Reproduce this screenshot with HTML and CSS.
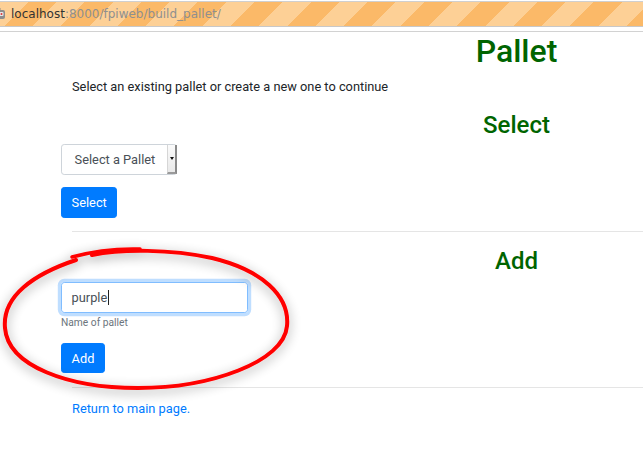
FILE: index.html
```html
<!DOCTYPE html>
<html lang="en">
<head>
<meta charset="utf-8">
<title>Build Pallet</title>
<link rel="stylesheet" href="styles.css">
</head>
<body>
<header class="chrome">
  <div class="urlbar">
    <svg class="bot-icon" width="12" height="12" viewBox="0 0 12 12" aria-hidden="true">
      <rect x="1" y="2" width="10" height="9" rx="2" fill="#8c8c8c"/>
      <rect x="2.5" y="4" width="7" height="4" rx="1" fill="#e8e8e8"/>
      <circle cx="4.5" cy="6" r="1" fill="#d33"/>
      <circle cx="7.5" cy="6" r="1" fill="#d33"/>
      <rect x="5.5" y="0" width="1" height="2" fill="#8c8c8c"/>
    </svg>
    <span class="host">localhost</span><span class="path">:8000/fpiweb/build_pallet/</span>
  </div>
</header>

<main class="page">
  <h1 class="title">Pallet</h1>
  <p class="intro">Select an existing pallet or create a new one to continue</p>

  <h3 class="section-title select-title">Select</h3>
  <form class="pallet-form">
    <div class="fake-select">
      <span class="fake-select-text">Select a Pallet</span>
      <span class="fake-select-btn"><span class="arrow"></span></span>
    </div>
    <button type="button" class="btn">Select</button>
  </form>

  <hr class="divider divider-top">

  <h3 class="section-title add-title">Add</h3>
  <form class="pallet-form">
    <div class="field"><span>purple</span><span class="caret"></span></div>
    <small class="help">Name of pallet</small>
    <button type="button" class="btn btn-add">Add</button>
  </form>

  <hr class="divider divider-bottom">

  <a class="back-link" href="#">Return to main page.</a>
</main>

<svg class="annotation" width="643" height="465" viewBox="0 0 643 465" aria-hidden="true">
  <defs>
    <filter id="shadow" x="-20%" y="-20%" width="140%" height="140%">
      <feGaussianBlur in="SourceAlpha" stdDeviation="6"/>
      <feOffset dx="0" dy="3" result="b"/>
      <feComponentTransfer><feFuncA type="linear" slope="0.4"/></feComponentTransfer>
      <feMerge><feMergeNode/><feMergeNode in="SourceGraphic"/></feMerge>
    </filter>
  </defs>
  <g filter="url(#shadow)" fill="none" stroke="#ff0000" stroke-linecap="round" stroke-linejoin="round">
    <path stroke-width="4" d="M 92 255 C 122 249, 170 249, 212 258 C 262 270, 290 296, 287 326 C 284 362, 210 388, 138 388 C 68 388, 8 366, 5 328 C 2 296, 34 274, 76 260"/>
    <path stroke-width="3.5" d="M 72 257 Q 104 248, 140 249"/>
  </g>
</svg>
</body>
</html>
```

FILE: styles.css
```css
html, body {
  margin: 0;
  padding: 0;
  width: 643px;
  height: 465px;
  overflow: hidden;
  background: #fff;
}

body {
  position: relative;
  font-family: Roboto, "Liberation Sans", sans-serif;
  font-size: 12.8px;
  line-height: 1.5;
  color: #212529;
}

/* ---- browser url bar strip ---- */
.chrome {
  height: 30px;
  border-bottom: 1px solid #d2d2d2;
  background: #fff;
}

.urlbar {
  margin-top: 1px;
  height: 24px;
  border-top: 1px solid #cfcfcf;
  border-bottom: 1px solid #c8c8c8;
  background: repeating-linear-gradient(135deg, #fdd096 0 20px, #fbb968 20px 40px);
  display: flex;
  align-items: center;
  font-family: "DejaVu Sans", sans-serif;
  font-size: 12px;
  white-space: nowrap;
  overflow: hidden;
}

.bot-icon {
  margin-left: -6px;
  margin-right: 5px;
  flex: none;
}

.host {
  color: #333;
}

.path {
  color: #8f8f8f;
}

/* ---- page ---- */
.page {
  margin-left: 72px;
}

.title {
  margin: 0 0 6.4px;
  padding-left: 318px;
  font-size: 32px;
  font-weight: 500;
  line-height: 38.4px;
  color: #006400;
  text-align: center;
}

.intro {
  margin: 0 0 15px;
}

.section-title {
  margin: 0;
  padding-left: 318px;
  font-size: 24px;
  font-weight: 500;
  line-height: 28.8px;
  color: #006400;
  text-align: center;
}

.select-title {
  margin-bottom: 4.6px;
}

.add-title {
  margin-bottom: 6.7px;
}

.pallet-form {
  margin-left: -11px;
  display: flex;
  flex-direction: column;
  align-items: flex-start;
}

.fake-select {
  box-sizing: border-box;
  width: 116px;
  height: 30.4px;
  border: 1px solid #ced4da;
  border-radius: 3.2px;
  background: #fff;
  display: flex;
  align-items: center;
  justify-content: space-between;
  margin-bottom: 12.6px;
  color: #495057;
}

.fake-select-text {
  padding-left: 12.6px;
}

.fake-select-btn {
  box-sizing: border-box;
  width: 10px;
  height: 29px;
  margin-right: -1px;
  border-left: 1px solid #d6d6d6;
  border-right: 2px solid #8a8a8a;
  border-bottom: 2px solid #9a9a9a;
  background: linear-gradient(#fbfbfb, #e9e9e9);
  display: flex;
  align-items: center;
  justify-content: center;
}

.arrow {
  width: 0;
  height: 0;
  border-left: 2.5px solid transparent;
  border-right: 2.5px solid transparent;
  border-top: 3px solid #111;
}

.btn {
  box-sizing: border-box;
  height: 30.4px;
  padding: 4.8px 9.6px;
  font-family: Roboto, "Liberation Sans", sans-serif;
  font-size: 12.8px;
  line-height: 19.2px;
  color: #fff;
  background: #007bff;
  border: 1px solid #007bff;
  border-radius: 3.2px;
}

.divider {
  margin: 13.4px 0 14.5px;
  border: 0;
  border-top: 1px solid rgba(0, 0, 0, 0.1);
  height: 0;
}

.divider-bottom {
  margin: 13.6px 0 11px;
}

.field {
  box-sizing: border-box;
  width: 187px;
  height: 30.4px;
  padding: 4.8px 9.6px;
  border: 1px solid #80bdff;
  border-radius: 3.2px;
  box-shadow: 0 0 0 3.2px rgba(0, 123, 255, 0.25);
  color: #495057;
  line-height: 19.2px;
  display: flex;
  align-items: center;
}

.caret {
  display: inline-block;
  width: 1px;
  height: 15px;
  margin-left: 1px;
  background: #222;
}

.help {
  margin-top: 2px;
  font-size: 10.24px;
  line-height: 15.36px;
  color: #6c757d;
  margin-bottom: 13.2px;
}

.back-link {
  color: #007bff;
  text-decoration: none;
}

.annotation {
  position: absolute;
  left: 0;
  top: 0;
  pointer-events: none;
}
```
